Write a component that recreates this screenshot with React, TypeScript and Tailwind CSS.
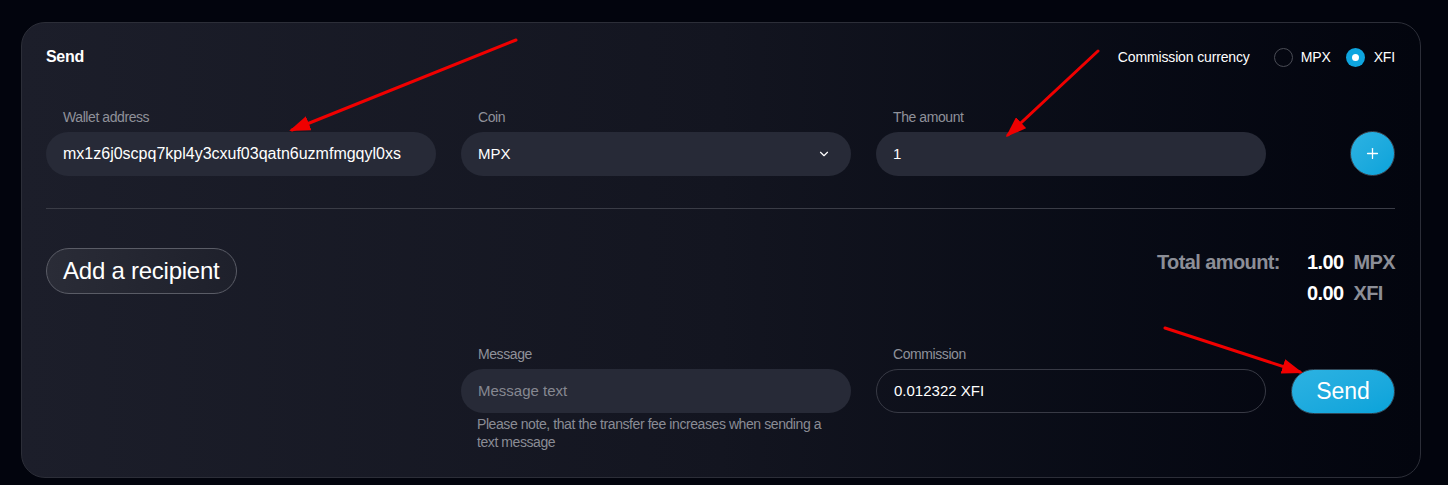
import { ChevronDown, Plus } from "lucide-react";

const font = { fontFamily: '"Liberation Sans", Arial, sans-serif' };

function Field({ label, children }: { label: string; children: React.ReactNode }) {
  return (
    <div className="flex flex-col">
      <span className="pl-[17px] text-[14px] leading-5 tracking-[-0.03em] text-[#8f919a]">{label}</span>
      <div className="mt-[5px]">{children}</div>
    </div>
  );
}

function Arrows() {
  const arrows = [
    { x1: 516, y1: 40, x2: 292, y2: 130 },
    { x1: 1098, y1: 51, x2: 1008, y2: 135 },
    { x1: 1165, y1: 328, x2: 1300, y2: 372 },
  ];
  return (
    <svg className="pointer-events-none absolute left-0 top-0" width="1448" height="485">
      <defs>
        <marker id="head" markerWidth="7" markerHeight="5" refX="6" refY="2.5" orient="auto" markerUnits="strokeWidth">
          <path d="M0,0 L7,2.5 L0,5 Z" fill="#f00000" />
        </marker>
      </defs>
      {arrows.map((a, i) => (
        <line key={i} {...a} stroke="#f00000" strokeWidth="3" strokeLinecap="round" markerEnd="url(#head)" />
      ))}
    </svg>
  );
}

export default function App() {
  return (
    <div className="relative h-[485px] w-[1448px] bg-[#02040d] pl-[21px] pr-[27px] pt-[22px]" style={font}>
      <div className="rounded-[24px] border border-[#2c2e38] bg-gradient-to-r from-[#1c1e2a] via-[#131520] to-[#03050e] pb-[26px] pl-[24px] pr-[25px] pt-[24px] text-white">
        {/* Header */}
        <div className="flex h-5 items-center justify-between">
          <h2 className="text-[16px] font-bold tracking-[-0.02em]">Send</h2>
          <div className="flex items-center text-[14px] tracking-[-0.01em]">
            <span>Commission currency</span>
            <span className="ml-[24px] h-[19px] w-[19px] rounded-full border border-[#4a4c55]" />
            <span className="ml-[8px]">MPX</span>
            <span className="ml-[15px] flex h-[19px] w-[19px] items-center justify-center rounded-full bg-[#0ea5df]">
              <span className="h-[7px] w-[7px] rounded-full bg-white" />
            </span>
            <span className="ml-[9px]">XFI</span>
          </div>
        </div>

        {/* Recipient row */}
        <div className="mt-[40px] grid grid-cols-[1fr_1fr_1fr_104px] gap-x-[25px]">
          <Field label="Wallet address">
            <div className="flex h-[44px] items-center rounded-full bg-[#272a37] px-[17px] text-[16px]">
              mx1z6j0scpq7kpl4y3cxuf03qatn6uzmfmgqyl0xs
            </div>
          </Field>
          <Field label="Coin">
            <div className="flex h-[44px] items-center justify-between rounded-full bg-[#272a37] pl-[17px] pr-[20px] text-[15px]">
              <span>MPX</span>
              <ChevronDown className="h-[14px] w-[14px] text-white" strokeWidth={2} />
            </div>
          </Field>
          <Field label="The amount">
            <div className="flex h-[44px] items-center rounded-full bg-[#272a37] px-[17px] text-[15px]">1</div>
          </Field>
          <div className="flex items-end justify-end">
            <button className="flex h-[45px] w-[45px] items-center justify-center rounded-full border border-[#3a4450] bg-gradient-to-br from-[#2cb2e2] to-[#08a3da]">
              <Plus className="h-[17px] w-[17px] text-white" strokeWidth={1.8} />
            </button>
          </div>
        </div>

        <div className="mt-[32px] h-px bg-[#3a3c46]" />

        {/* Add recipient / totals */}
        <div className="mt-[39px] flex items-start justify-between">
          <button className="h-[46px] rounded-full border border-[#5a5c66] bg-gradient-to-r from-[#2a2c37] to-[#1e202b] px-[16px] text-[24px] tracking-[-0.01em] text-white">
            Add a recipient
          </button>
          <div className="mt-[4px] grid grid-cols-[auto_auto] gap-x-[27px] gap-y-[11px] text-[20px] font-bold leading-5 tracking-[-0.03em]">
            <span className="text-[#8c8e97]">Total amount:</span>
            <span>
              <span className="text-white">1.00</span>
              <span className="ml-[10px] text-[#8c8e97]">MPX</span>
            </span>
            <span className="col-start-2">
              <span className="text-white">0.00</span>
              <span className="ml-[10px] text-[#8c8e97]">XFI</span>
            </span>
          </div>
        </div>

        {/* Message row */}
        <div className="mt-[41px] grid grid-cols-[1fr_1fr_1fr_104px] gap-x-[25px]">
          <div />
          <Field label="Message">
            <div className="flex h-[44px] items-center rounded-full bg-[#272a37] px-[17px] text-[15px] text-[#868891]">
              Message text
            </div>
            <p className="mt-[2px] pl-[16px] pr-[14px] text-[14px] leading-[18px] tracking-[-0.03em] text-[#8a8c95]">
              Please note, that the transfer fee increases when sending a text message
            </p>
          </Field>
          <Field label="Commission">
            <div className="flex h-[44px] items-center rounded-full border border-[#383a45] px-[17px] text-[15px]">
              0.012322 XFI
            </div>
          </Field>
          <div className="pt-[25px]">
            <button className="h-[45px] w-[104px] rounded-full border border-[#2f4858] bg-gradient-to-br from-[#2cb2e2] to-[#08a3da] text-[23px] text-white">
              Send
            </button>
          </div>
        </div>
      </div>
      <Arrows />
    </div>
  );
}
